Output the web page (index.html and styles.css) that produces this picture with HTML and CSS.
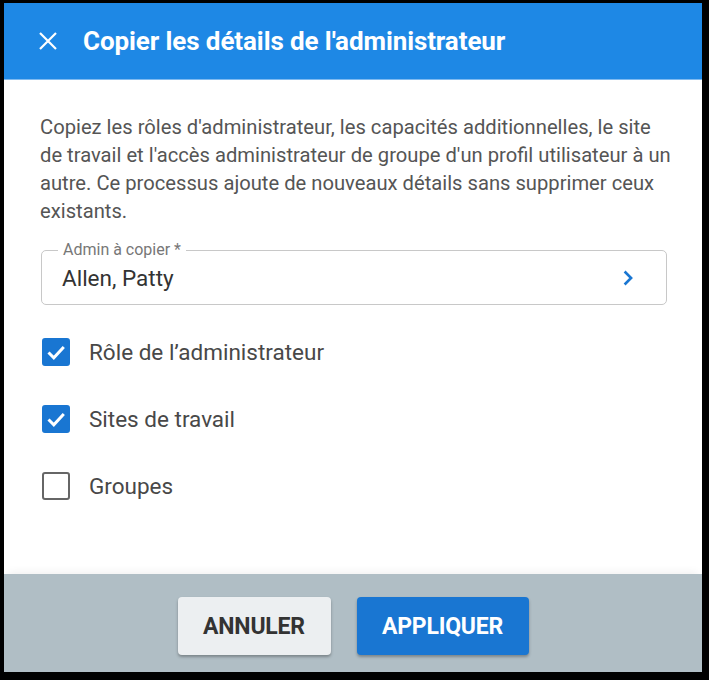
FILE: index.html
```html
<!DOCTYPE html>
<html lang="fr">
<head>
<meta charset="utf-8">
<link rel="stylesheet" href="styles.css">
</head>
<body>
<div class="dialog">
  <header class="header">
    <svg class="close" viewBox="0 0 24 24" width="24" height="24"><path d="M4 4L20 20M20 4L4 20" stroke="#fff" stroke-width="2.2" fill="none"/></svg>
    <h1 class="title">Copier les détails de l'administrateur</h1>
  </header>
  <main class="content">
    <p class="desc">Copiez les rôles d'administrateur, les capacités additionnelles, le site de travail et l'accès administrateur de groupe d'un profil utilisateur à un autre. Ce processus ajoute de nouveaux détails sans supprimer ceux existants.</p>
    <div class="field">
      <span class="field-label">Admin à copier *</span>
      <span class="field-value">Allen, Patty</span>
      <svg class="chevron" viewBox="0 0 24 24" width="24" height="24"><path d="M8.6 5.5L15.1 12L8.6 18.5" stroke="#1976d2" stroke-width="2.6" fill="none"/></svg>
    </div>
    <div class="checks">
      <label class="check">
        <span class="box on"><svg viewBox="0 0 24 24" width="24" height="24"><path d="M4.5 12.5L9.8 17.8L19.8 7" stroke="#fff" stroke-width="3" fill="none"/></svg></span>
        <span class="check-text">Rôle de l’administrateur</span>
      </label>
      <label class="check">
        <span class="box on"><svg viewBox="0 0 24 24" width="24" height="24"><path d="M4.5 12.5L9.8 17.8L19.8 7" stroke="#fff" stroke-width="3" fill="none"/></svg></span>
        <span class="check-text">Sites de travail</span>
      </label>
      <label class="check">
        <span class="box"></span>
        <span class="check-text">Groupes</span>
      </label>
    </div>
  </main>
  <footer class="footer">
    <button class="btn btn-cancel">ANNULER</button>
    <button class="btn btn-apply">APPLIQUER</button>
  </footer>
</div>
</body>
</html>
```
FILE: styles.css
```css
html, body {
  margin: 0;
  padding: 0;
  background: #000;
}
body {
  width: 709px;
  height: 680px;
  overflow: hidden;
}
.dialog {
  margin: 3px 7px 8px 4px;
  height: 669px;
  background: #fff;
  display: flex;
  flex-direction: column;
  font-family: Roboto, "Liberation Sans", sans-serif;
}
.header {
  height: 76px;
  flex: none;
  background: #1e88e5;
  display: flex;
  align-items: center;
  padding-left: 32px;
  border-bottom: 1px solid #7fbaf0;
}
.close {
  display: block;
  flex: none;
}
.title {
  margin: 0 0 0 23px;
  color: #fff;
  font-size: 26px;
  font-weight: 700;
  letter-spacing: -0.1px;
}
.content {
  flex: 1;
  padding: 33px 35px 0 37px;
}
.desc {
  margin: 0 -5px 0 -1px;
  font-size: 20.2px;
  line-height: 28px;
  color: #555;
}
.field {
  position: relative;
  margin-top: 25px;
  height: 55px;
  border: 1px solid #c8c8c8;
  border-radius: 5px;
  display: flex;
  align-items: center;
  padding: 0 26px 0 20px;
  box-sizing: border-box;
}
.field-label {
  position: absolute;
  top: -10px;
  left: 16px;
  padding: 0 5px;
  background: #fff;
  font-size: 16px;
  line-height: 18px;
  color: #777;
}
.field-value {
  flex: 1;
  font-size: 22.5px;
  color: #333;
}
.chevron {
  display: block;
}
.checks {
  margin-top: 33px;
  display: flex;
  flex-direction: column;
  gap: 39px;
}
.check {
  display: flex;
  align-items: center;
  height: 28px;
}
.box {
  width: 28px;
  height: 28px;
  box-sizing: border-box;
  border-radius: 3px;
  border: 2px solid #666;
  display: flex;
  align-items: center;
  justify-content: center;
  flex: none;
  margin-left: 1px;
}
.box.on {
  background: #1976d2;
  border-color: #1976d2;
}
.check-text {
  margin-left: 19px;
  font-size: 22.5px;
  color: #484848;
}
.footer {
  flex: none;
  height: 98px;
  background: #b0bec5;
  box-shadow: 0 -6px 8px -4px rgba(0,0,0,0.06);
  display: flex;
  justify-content: center;
  align-items: flex-start;
  padding-top: 23px;
  box-sizing: border-box;
  gap: 26px;
}
.btn {
  height: 58px;
  border: none;
  border-radius: 4px;
  font-family: Roboto, "Liberation Sans", sans-serif;
  font-weight: 700;
  font-size: 23px;
  letter-spacing: -0.2px;
  box-shadow: 0 2px 3px rgba(0,0,0,0.3);
}
.btn-cancel {
  width: 153px;
  background: #eceff1;
  color: #333;
}
.btn-apply {
  width: 172px;
  background: #1976d2;
  color: #fff;
}
```
